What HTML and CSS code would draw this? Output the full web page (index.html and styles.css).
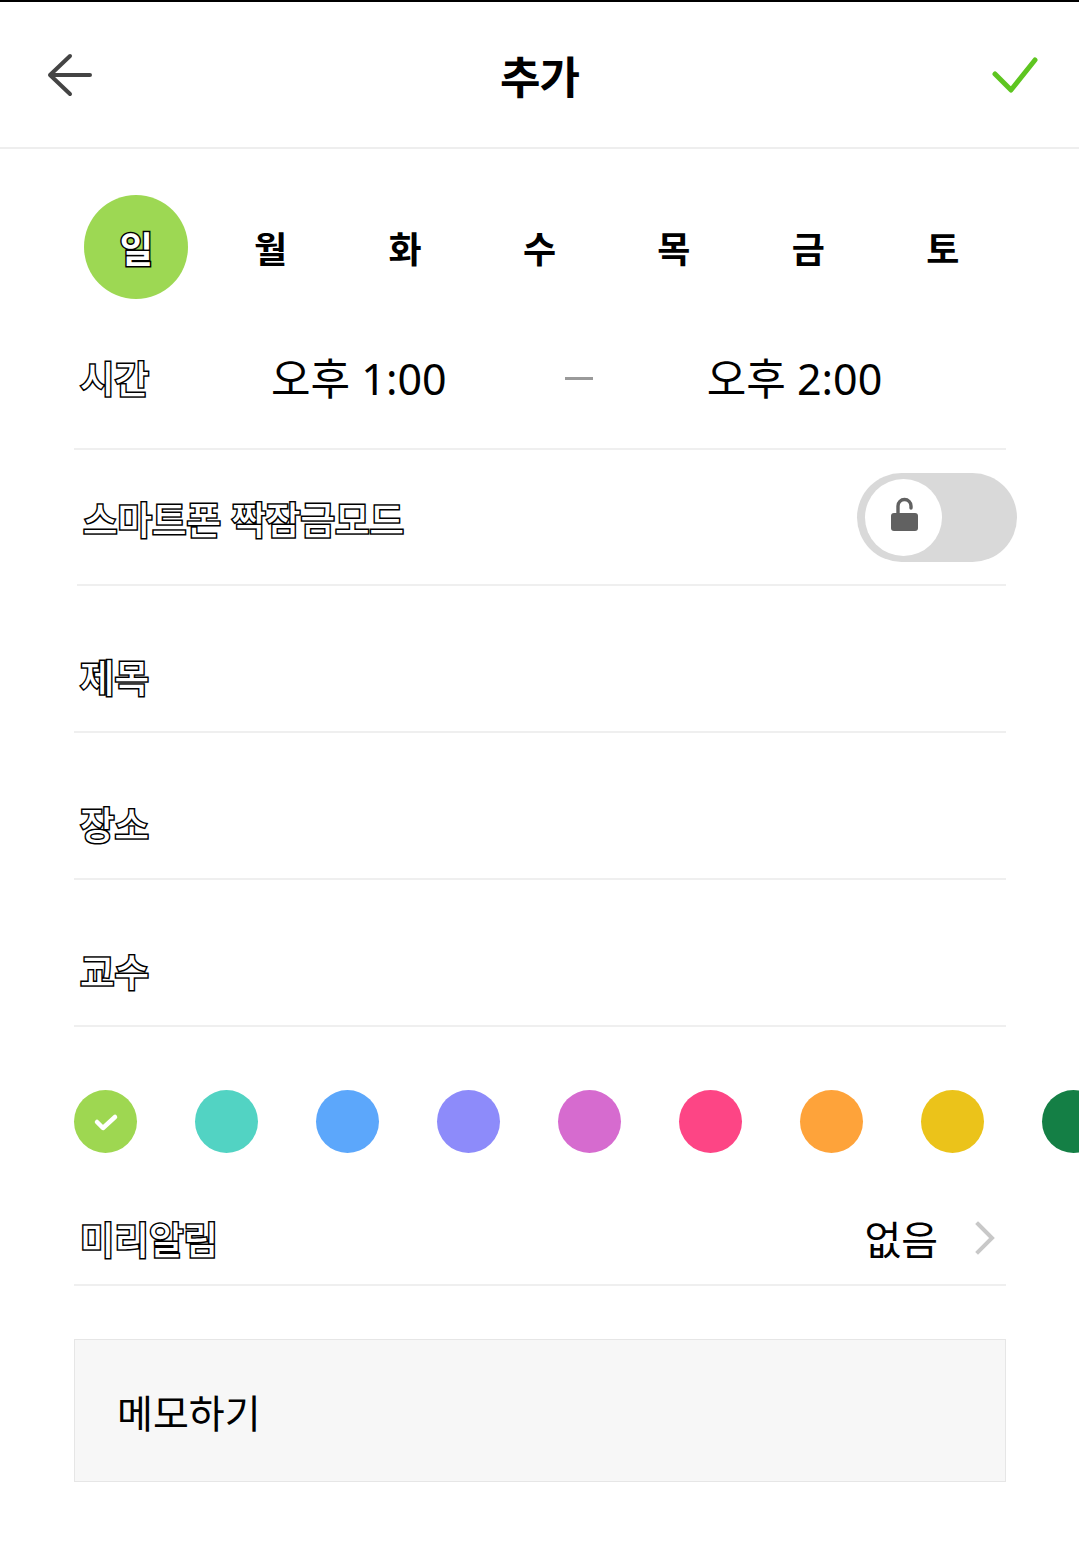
FILE: index.html
```html
<!DOCTYPE html>
<html lang="ko">
<head>
<meta charset="utf-8">
<link rel="stylesheet" href="styles.css">
</head>
<body>
<div class="page">
  <header class="topbar">
    <button class="icon-btn back" aria-label="뒤로">
      <svg width="48" height="48" viewBox="0 0 48 48"><path d="M24 5 L4 24 L24 43 M4 24 H44" fill="none" stroke="#444" stroke-width="4" stroke-linecap="round" stroke-linejoin="round"/></svg>
    </button>
    <h1 class="title">추가</h1>
    <button class="icon-btn done" aria-label="완료">
      <svg width="48" height="40" viewBox="0 0 48 40"><path d="M4 19 L20 35 L44 5" fill="none" stroke="#5ec520" stroke-width="5" stroke-linecap="round" stroke-linejoin="round"/></svg>
    </button>
  </header>

  <main class="content">
    <div class="days">
      <span class="day selected"><span class="outline">일</span></span>
      <span class="day">월</span>
      <span class="day">화</span>
      <span class="day">수</span>
      <span class="day">목</span>
      <span class="day">금</span>
      <span class="day">토</span>
    </div>

    <div class="row time-row">
      <span class="label outline">시간</span>
      <span class="time start">오후 1:00</span>
      <span class="dash"></span>
      <span class="time end">오후 2:00</span>
    </div>

    <div class="row toggle-row">
      <span class="label outline">스마트폰 짝잠금모드</span>
      <span class="toggle">
        <span class="knob">
          <svg width="30" height="40" viewBox="0 0 30 40"><path d="M9 19 V12 a6.5 6.5 0 0 1 13 0 V14" fill="none" stroke="#616161" stroke-width="3.4" stroke-linecap="round"/><rect x="2" y="19" width="27" height="18" rx="3" fill="#616161"/></svg>
        </span>
      </span>
    </div>

    <div class="row field-row"><span class="label outline">제목</span></div>
    <div class="row field-row"><span class="label outline">장소</span></div>
    <div class="row field-row"><span class="label outline">교수</span></div>

    <div class="colors">
      <span class="swatch checked" style="background:#9ed751">
        <svg width="26" height="20" viewBox="0 0 26 20"><path d="M4 10 L10 16 L22 5" fill="none" stroke="#fff" stroke-width="4.5" stroke-linecap="round" stroke-linejoin="round"/></svg>
      </span>
      <span class="swatch" style="background:#52d3c3"></span>
      <span class="swatch" style="background:#5ca7fb"></span>
      <span class="swatch" style="background:#8d8bfa"></span>
      <span class="swatch" style="background:#d66bcf"></span>
      <span class="swatch" style="background:#fd4585"></span>
      <span class="swatch" style="background:#fea33a"></span>
      <span class="swatch" style="background:#ebc31a"></span>
      <span class="swatch" style="background:#147f45"></span>
    </div>

    <div class="row alarm-row">
      <span class="label outline">미리알림</span>
      <span class="alarm-value">없음
        <svg width="22" height="34" viewBox="0 0 22 34"><path d="M4 3 L18 17 L4 31" fill="none" stroke="#c8c8c8" stroke-width="4" stroke-linecap="square"/></svg>
      </span>
    </div>

    <div class="memo">메모하기</div>
  </main>
</div>
</body>
</html>
```

FILE: styles.css
```css
html, body {
  margin: 0;
  padding: 0;
  background: #fff;
  overflow: hidden;
}
body {
  font-family: "Noto Sans CJK KR", "Noto Sans", sans-serif;
  color: #000;
}
.page {
  width: 1079px;
  height: 1549px;
  border-top: 2px solid #000;
  box-sizing: border-box;
  overflow: hidden;
}
.topbar {
  height: 145px;
  border-bottom: 2px solid #eeeeee;
  display: flex;
  align-items: center;
  justify-content: space-between;
  padding: 0 40px 0 46px;
  position: relative;
}
.icon-btn {
  border: 0;
  background: none;
  padding: 0;
  display: flex;
  align-items: center;
}
.title {
  position: absolute;
  left: 0;
  right: 0;
  text-align: center;
  margin: 0;
  font-size: 44px;
  font-weight: 700;
  letter-spacing: -1px;
  pointer-events: none;
}
.content {
  padding: 0 73px 0 74px;
}
.outline {
  color: #fff;
  -webkit-text-stroke: 3px #000;
  paint-order: stroke fill;
}
.days {
  display: grid;
  grid-template-columns: repeat(7, 1fr);
  margin: 46px -4px 0 -5px;
  height: 104px;
  align-items: center;
  justify-items: center;
}
.day {
  font-size: 36px;
  font-weight: 700;
  width: 104px;
  height: 104px;
  display: flex;
  align-items: center;
  justify-content: center;
  border-radius: 50%;
}
.day.selected {
  background: #9dd853;
}
.row {
  display: flex;
  align-items: center;
  border-bottom: 2px solid #efefef;
}
.label {
  font-size: 37.5px;
  font-weight: 500;
  margin-left: 6px;
  letter-spacing: 0;
}
.time-row {
  height: 151px;
  padding-top: 6px;
  box-sizing: border-box;
}
.label + .time.start { margin-top: 0; }
.time {
  font-family: "Noto Sans", "Noto Sans CJK KR", sans-serif;
  font-size: 43px;
  font-weight: 400;
}
.time.start { margin-left: 122px; }
.dash {
  width: 28px;
  height: 3px;
  background: #9a9a9a;
  margin-left: 118px;
  margin-top: 4px;
}
.time.end { margin-left: 114px; }
.toggle-row {
  height: 134px;
  justify-content: space-between;
  margin-left: 3px;
}
.toggle {
  width: 160px;
  height: 89px;
  border-radius: 45px;
  background: #d9d9d9;
  margin-right: -11px;
  display: flex;
  align-items: center;
  padding-left: 8px;
  box-sizing: border-box;
}
.knob {
  width: 77px;
  height: 77px;
  border-radius: 50%;
  background: #fff;
  display: flex;
  align-items: center;
  justify-content: center;
}
.knob svg { margin-top: -6px; }
.field-row {
  height: 147px;
  padding-top: 34px;
  box-sizing: border-box;
}
.colors {
  display: flex;
  gap: 58px;
  margin-top: 63px;
  height: 63px;
}
.swatch {
  flex: none;
  width: 63px;
  height: 63px;
  border-radius: 50%;
  display: flex;
  align-items: center;
  justify-content: center;
}
.alarm-row {
  height: 133px;
  justify-content: space-between;
  padding-top: 38px;
  box-sizing: border-box;
}
.alarm-value {
  display: flex;
  align-items: center;
  gap: 36px;
  font-size: 40px;
  margin-right: 10px;
}
.memo {
  margin-top: 53px;
  height: 143px;
  background: #f7f7f7;
  border: 1px solid #e6e6e6;
  box-sizing: border-box;
  display: flex;
  align-items: center;
  padding-left: 42px;
  font-size: 39px;
}
```
